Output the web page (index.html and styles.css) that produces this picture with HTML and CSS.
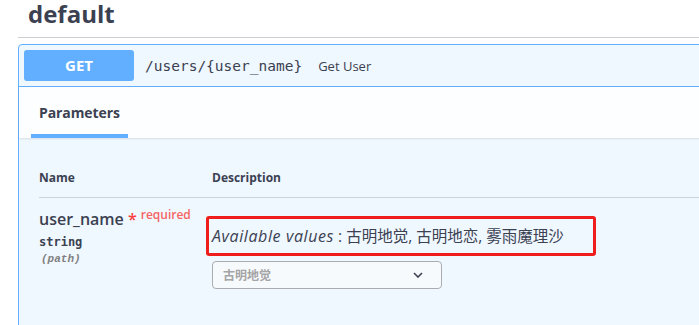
FILE: index.html
```html
<!DOCTYPE html>
<html lang="en">
<head>
<meta charset="UTF-8">
<meta name="viewport" content="width=device-width, initial-scale=1.0">
<title>Swagger UI</title>
<link rel="stylesheet" href="styles.css">
</head>
<body>
<div class="tag-section">
  <h3 class="tag">default</h3>
  <div class="opblock">
    <div class="summary">
      <span class="method">GET</span>
      <span class="path">/users/{user_name}</span>
      <span class="summary-text">Get User</span>
    </div>
    <div class="section-header">
      <div class="tab">Parameters</div>
    </div>
    <div class="params">
      <table class="param-table">
        <tr>
          <th class="col-name">Name</th>
          <th>Description</th>
        </tr>
        <tr>
          <td class="col-name">
            <div class="param-name">user_name<span class="star">&nbsp;*</span><span class="required">required</span></div>
            <div class="param-type">string</div>
            <div class="param-in">(path)</div>
          </td>
          <td>
            <p class="enum"><i>Available values</i> : 古明地觉, 古明地恋, 雾雨魔理沙</p>
            <div class="select">
              <span>古明地觉</span>
              <svg width="10" height="6" viewBox="0 0 10 6"><path d="M1 1 L5 5 L9 1" fill="none" stroke="#3b4151" stroke-width="1.6"/></svg>
            </div>
          </td>
        </tr>
      </table>
    </div>
  </div>
</div>
</body>
</html>
```

FILE: styles.css
```css
body {
  margin: 0;
  background: #fff;
  font-family: "Open Sans", "Noto Sans CJK SC", sans-serif;
  color: #3b4151;
  overflow: hidden;
}
.tag-section {
  margin-left: 18px;
  width: 720px;
}
.tag {
  margin: 0;
  padding: 2px 10px 0 10px;
  height: 35px;
  font-size: 24px;
  font-weight: 700;
  line-height: 24px;
  border-bottom: 1px solid #cbcdd2;
}
.opblock {
  margin-top: 6px;
  border: 1px solid #61affe;
  border-radius: 4px;
  background: #eff7ff;
  height: 300px;
}
.summary {
  display: flex;
  align-items: center;
  padding: 5px;
  height: 31px;
  border-bottom: 1px solid #61affe;
}
.method {
  width: 110px;
  height: 31px;
  line-height: 31px;
  text-align: center;
  background: #61affe;
  color: #fff;
  border-radius: 3px;
  font-size: 15px;
  font-weight: 700;
}
.path {
  margin-left: 11px;
  font-family: "DejaVu Sans Mono", monospace;
  font-size: 14.5px;
}
.summary-text {
  margin-left: 16px;
  font-size: 13px;
}
.section-header {
  background: rgba(255, 255, 255, 0.8);
  padding: 0 12px;
  height: 51px;
  box-shadow: 0 1px 2px rgba(0, 0, 0, 0.1);
  display: flex;
  align-items: flex-end;
}
.tab {
  padding: 6px 8px 0 8px;
  height: 43px;
  font-size: 14px;
  font-weight: 700;
  border-bottom: 4px solid #61affe;
  box-sizing: border-box;
  line-height: 24px;
  letter-spacing: -0.1px;
}
.params {
  padding: 21px 20px 0 20px;
}
.param-table {
  border-collapse: collapse;
  width: 100%;
}
.param-table th {
  text-align: left;
  font-size: 12px;
  font-weight: 700;
  padding: 10px 0 11px 0;
  border-bottom: 1px solid #cdd2da;
}
.param-table td {
  vertical-align: top;
  padding: 10px 0 0 0;
}
.col-name {
  width: 173px;
}
.param-name {
  font-size: 16px;
  font-weight: 600;
}
.star {
  color: #f93e3e;
}
.required {
  color: #f93e3e;
  opacity: 0.8;
  font-size: 12px;
  position: relative;
  top: -6px;
  margin-left: 4px;
}
.param-type {
  font-family: "DejaVu Sans Mono", monospace;
  font-size: 12px;
  font-weight: 700;
  margin-top: 5px;
}
.param-in {
  font-family: "Liberation Mono", monospace;
  font-size: 11px;
  font-style: italic;
  font-weight: 700;
  color: #808080;
  margin-top: 4px;
  padding-left: 2px;
}
.enum {
  margin: 8px 0 0 -6px;
  width: 378px;
  height: 34px;
  border: 3px solid #f01d1d;
  border-radius: 3px;
  padding: 0 3px;
  font-size: 15.5px;
  line-height: 34px;
}
.enum i {
  font-size: 16px;
  letter-spacing: 0.6px;
}
.select {
  margin-top: 5px;
  width: 230px;
  height: 28px;
  box-sizing: border-box;
  border: 1px solid #a9acb1;
  border-radius: 4px;
  background: #f7fafd;
  display: flex;
  align-items: center;
  justify-content: space-between;
  padding: 0 18px 0 10px;
  font-size: 12px;
  font-weight: 700;
  color: #a5a5a5;
}
```
